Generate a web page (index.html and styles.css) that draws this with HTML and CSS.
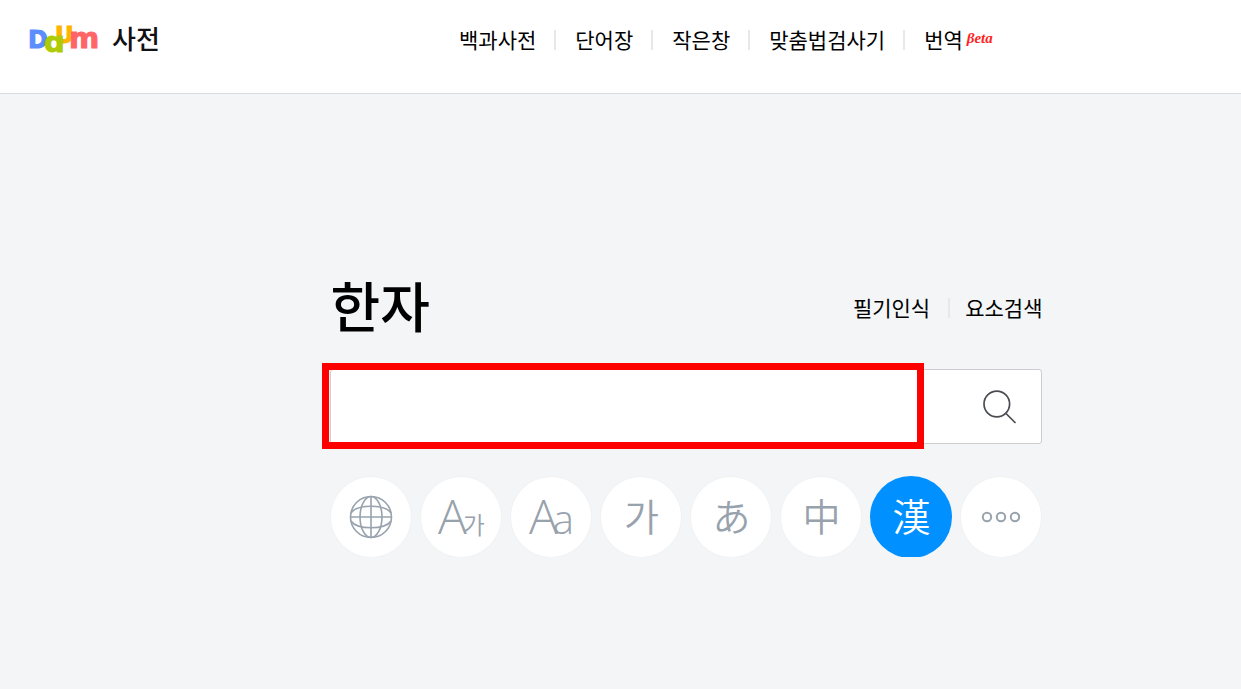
FILE: index.html
```
<!DOCTYPE html>
<html lang="ko">
<head>
    <meta charset="UTF-8">
    <meta name="viewport" content="width=device-width, initial-scale=1.0">
    <title>Daum 한자사전</title>
    <link rel="stylesheet" href="styles.css">
</head>
<body>
    <header class="header">
        <div class="brand">
            <a href="#" class="logo">
                <svg width="70" height="40" viewBox="0 0 70 40">
                    <text class="logo-u" x="25" y="24">U</text>
                    <text class="logo-d" x="-2" y="29">D</text>
                    <text class="logo-a" x="14" y="33">ɑ</text>
                    <text class="logo-m" x="39" y="29">m</text>
                </svg>
            </a>
            <a href="#" class="service">사전</a>
        </div>
        <nav class="menu">
            <a href="#">백과사전</a>
            <a href="#">단어장</a>
            <a href="#">작은창</a>
            <a href="#">맞춤법검사기</a>
            <a href="#">번역<em class="beta">βeta</em></a>
        </nav>
    </header>

    <main class="main">
        <div class="title-row">
            <h1>한자</h1>
            <div class="menu tools">
                <a href="#">필기인식</a>
                <a href="#">요소검색</a>
            </div>
        </div>

        <form class="search">
            <input type="text" class="search-input" aria-label="검색어">
            <button type="submit" class="search-btn" aria-label="검색">
                <svg width="36" height="36" viewBox="0 0 36 36" fill="none" stroke="#4a4d51" stroke-width="1.7">
                    <circle cx="15.8" cy="15" r="12.8"/>
                    <path d="M25 24.5L34.5 34"/>
                </svg>
            </button>
            <span class="mark"></span>
        </form>

        <div class="dics">
            <button type="button" class="dic" aria-label="전체">
                <svg width="44" height="44" viewBox="0 0 44 44" fill="none" stroke="#98a2ad" stroke-width="1.6">
                    <circle cx="22" cy="22" r="20.5"/>
                    <ellipse cx="22" cy="22" rx="11" ry="20.5"/>
                    <path d="M22 1.5v41M1.5 22h41"/>
                    <path d="M2 18C8 9 36 9 42 18M2 26c6 9 34 9 40 0"/>
                </svg>
            </button>
            <button type="button" class="dic latin">A<span class="small-ga">가</span></button>
            <button type="button" class="dic latin">A<span class="small-a">a</span></button>
            <button type="button" class="dic char">가</button>
            <button type="button" class="dic char">あ</button>
            <button type="button" class="dic char">中</button>
            <button type="button" class="dic char on">漢</button>
            <button type="button" class="dic" aria-label="더보기">
                <svg width="40" height="12" viewBox="0 0 40 12" fill="none" stroke="#98a2ad" stroke-width="2">
                    <circle cx="6" cy="6" r="4.2"/>
                    <circle cx="20" cy="6" r="4.2"/>
                    <circle cx="34" cy="6" r="4.2"/>
                </svg>
            </button>
        </div>
    </main>
</body>
</html>
```
FILE: styles.css
```
* {
    margin: 0;
    padding: 0;
    box-sizing: border-box;
}

body {
    background-color: #f3f5f7;
    color: #000;
    font-family: "Noto Sans CJK KR", sans-serif;
    font-size: 21px;
    line-height: 30px;
}

a {
    color: inherit;
    text-decoration: none;
}

button {
    border: 0;
    background: none;
    cursor: pointer;
}

svg {
    display: block;
}

/* header */
.header {
    display: flex;
    padding: 19px 30px 34px;
    border-bottom: 1px solid #dadcde;
    background-color: #fff;
}

.brand {
    display: flex;
    align-items: center;
    gap: 12px;
    width: 429px;
}

.logo svg {
    overflow: visible;
}

.logo svg text {
    font-family: "DejaVu Sans", sans-serif;
    font-weight: 700;
    stroke-width: 1px;
}

.logo-d {
    fill: #5c8dff;
    stroke: #5c8dff;
    font-size: 24px;
}

.logo-a {
    fill: #afcb08;
    stroke: #afcb08;
    font-size: 29px;
}

.logo-u {
    fill: #ffb400;
    stroke: #ffb400;
    font-size: 23px;
}

.logo-m {
    fill: #ff6565;
    stroke: #ff6565;
    font-size: 29px;
}

.service {
    color: #111;
    font-size: 26px;
    font-weight: 500;
    line-height: 38px;
    padding-bottom: 2px;
}

.menu {
    display: flex;
    align-items: center;
}

.menu a {
    display: flex;
    align-items: center;
}

.menu a + a::before {
    content: "";
    width: 2px;
    height: 20px;
    margin: 2px 19px 0 18px;
    background-color: #e7e8ea;
}

.beta {
    margin-left: 4px;
    padding-bottom: 2px;
    color: #f22;
    font-family: "Liberation Serif", serif;
    font-size: 15px;
    font-weight: 700;
}

/* main */
.main {
    width: 742px;
    max-width: 100%;
    margin-left: auto;
    margin-right: 16%;
    padding: 170px 0 0 30px;
}

.title-row {
    display: flex;
    justify-content: space-between;
    align-items: center;
}

.title-row h1 {
    font-size: 54px;
    font-weight: 500;
    line-height: 82px;
}

.tools {
    padding-top: 3px;
}

.tools a + a::before {
    margin: 2px 15px 0 18px;
}

.search {
    display: flex;
    position: relative;
    height: 75px;
    margin-top: 23px;
    border: 1px solid #ccced2;
    border-radius: 3px;
    background-color: #fff;
}

.search-input {
    flex: 1;
    min-width: 0;
    padding: 0 16px;
    border: 0;
    outline: 0;
    background: none;
    font: inherit;
}

.search-btn {
    padding: 0 24px;
}

/* frame round the text field */
.mark {
    position: absolute;
    top: -7px;
    left: -9px;
    width: 602px;
    height: 86px;
    border: 7px solid #f00;
    pointer-events: none;
}

.dics {
    display: flex;
    gap: 10px;
    margin-top: 33px;
    padding-left: 1px;
}

.dic {
    display: flex;
    justify-content: center;
    align-items: center;
    width: 80px;
    height: 80px;
    border-radius: 50%;
    background-color: #fff;
    box-shadow: 0 0 0 1px #f0f2f4;
    color: #98a2ad;
}

.char {
    padding-bottom: 6px;
    font-family: "Noto Sans CJK JP", "Noto Sans CJK KR", sans-serif;
    font-size: 38px;
    font-weight: 350;
}

.latin {
    align-items: baseline;
    font-family: "Open Sans", "Noto Sans CJK KR", sans-serif;
    font-size: 48px;
    font-weight: 350;
    line-height: 78px;
}

.small-ga {
    margin-left: -4px;
    font-size: 24px;
    line-height: 30px;
}

.small-a {
    margin-left: -5px;
    font-size: 40px;
    line-height: 40px;
}

.on {
    background-color: #0090ff;
    box-shadow: 0 0 0 1px #0090ff;
    color: #fff;
}
```
